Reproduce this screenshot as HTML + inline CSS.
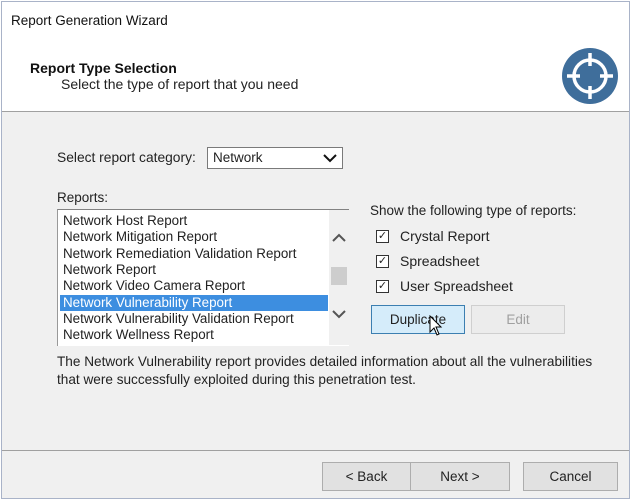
<!DOCTYPE html>
<html><head><style>
*{margin:0;padding:0;box-sizing:border-box}
body{width:633px;height:501px;background:#fff;position:relative;overflow:hidden;font-family:"Liberation Sans",sans-serif;font-size:13.5px;color:#222}
.a{position:absolute}
.win{left:1px;top:1px;width:629px;height:498px;border:1px solid #a9b3c8;background:#f0f0f0}
.hdr{left:2px;top:2px;width:627px;height:110px;background:#fff;border-bottom:1px solid #a0a0a0}
.btn{position:absolute;border:1px solid #adadad;background:#e1e1e1;text-align:center;line-height:27px;font-size:13.5px}
.cb{position:absolute;width:13px;height:13px;border:1px solid #333;background:#fff;font-size:11px;line-height:11px;text-align:center}
.row{position:absolute;left:63px;font-size:13.4px;white-space:nowrap;line-height:16px}
</style></head><body>
<div class="a win"></div>
<div class="a hdr"></div>
<div class="a" style="left:11px;top:13px;font-size:13.5px;color:#111">Report Generation Wizard</div>
<div class="a" style="left:30px;top:60px;font-weight:bold;font-size:14px;color:#111">Report Type Selection</div>
<div class="a" style="left:61px;top:76px;font-size:14px;color:#222">Select the type of report that you need</div>
<svg class="a" style="left:561px;top:47px" width="58" height="58" viewBox="0 0 58 58">
<circle cx="29" cy="29" r="28" fill="#3f6e9b"/>
<circle cx="29" cy="29" r="16" fill="none" stroke="#fff" stroke-width="3.5"/>
<path d="M29 6V19M29 39V52M6 29H19M39 29H52" stroke="#fff" stroke-width="3.5"/>
</svg>
<div class="a" style="left:57px;top:150px;font-size:13.8px">Select report category:</div>
<div class="a" style="left:207px;top:147px;width:136px;height:22px;border:1px solid #7a7a7a;background:#fff;padding-left:5px;line-height:20px">Network
<svg class="a" style="right:5px;top:6px" width="14" height="9"><path d="M1 1L7 7L13 1" fill="none" stroke="#111" stroke-width="2"/></svg></div>
<div class="a" style="left:57px;top:190px">Reports:</div>
<div class="a" style="left:57px;top:209px;width:292px;height:137px;background:#fff;border-top:1px solid #828282;border-left:1px solid #999"></div>
<div class="a" style="left:329px;top:210px;width:20px;height:135px;background:#f0f0f0"></div>
<div class="a" style="left:331px;top:267px;width:16px;height:18px;background:#cdcdcd"></div>
<svg class="a" style="left:331px;top:233px" width="16" height="10"><path d="M2 8L8 2L14 8" fill="none" stroke="#555" stroke-width="2"/></svg>
<svg class="a" style="left:331px;top:309px" width="16" height="10"><path d="M2 2L8 8L14 2" fill="none" stroke="#555" stroke-width="2"/></svg>
<div class="a" style="left:60px;top:295px;width:268px;height:16px;background:#3d8ee0"></div>
<div class="row" style="top:213px">Network Host Report</div>
<div class="row" style="top:229px">Network Mitigation Report</div>
<div class="row" style="top:246px">Network Remediation Validation Report</div>
<div class="row" style="top:262px">Network Report</div>
<div class="row" style="top:278px">Network Video Camera Report</div>
<div class="row" style="top:295px;color:#fff">Network Vulnerability Report</div>
<div class="row" style="top:311px">Network Vulnerability Validation Report</div>
<div class="row" style="top:327px">Network Wellness Report</div>
<div class="a" style="left:370px;top:203px">Show the following type of reports:</div>
<div class="cb" style="left:376px;top:230px">✓</div><div class="a" style="left:400px;top:228px;font-size:14px">Crystal Report</div>
<div class="cb" style="left:376px;top:255px">✓</div><div class="a" style="left:400px;top:253px;font-size:14px">Spreadsheet</div>
<div class="cb" style="left:376px;top:280px">✓</div><div class="a" style="left:400px;top:278px;font-size:14px">User Spreadsheet</div>
<div class="btn" style="left:371px;top:305px;width:94px;height:29px;background:#d5ecfa;border-color:#3c7fb1;line-height:27px">Duplicate</div>
<svg class="a" style="left:429px;top:315px" width="14" height="22"><path d="M1 1V17L5 13L8 20L10 19L7 12H12Z" fill="#fff" stroke="#000" stroke-width="1"/></svg>
<div class="btn" style="left:471px;top:305px;width:94px;height:29px;background:#ececec;border-color:#cfcfcf;color:#a0a0a0">Edit</div>
<div class="a" style="left:57px;top:353px;line-height:18px;font-size:13.6px;white-space:nowrap">The Network Vulnerability report provides detailed information about all the vulnerabilities<br>that were successfully exploited during this penetration test.</div>
<div class="a" style="left:2px;top:450px;width:627px;height:1px;background:#a0a0a0"></div>
<div class="btn" style="left:322px;top:462px;width:89px;height:29px">&lt; Back</div>
<div class="btn" style="left:410px;top:462px;width:100px;height:29px">Next &gt;</div>
<div class="btn" style="left:523px;top:462px;width:95px;height:29px">Cancel</div>
</body></html>
